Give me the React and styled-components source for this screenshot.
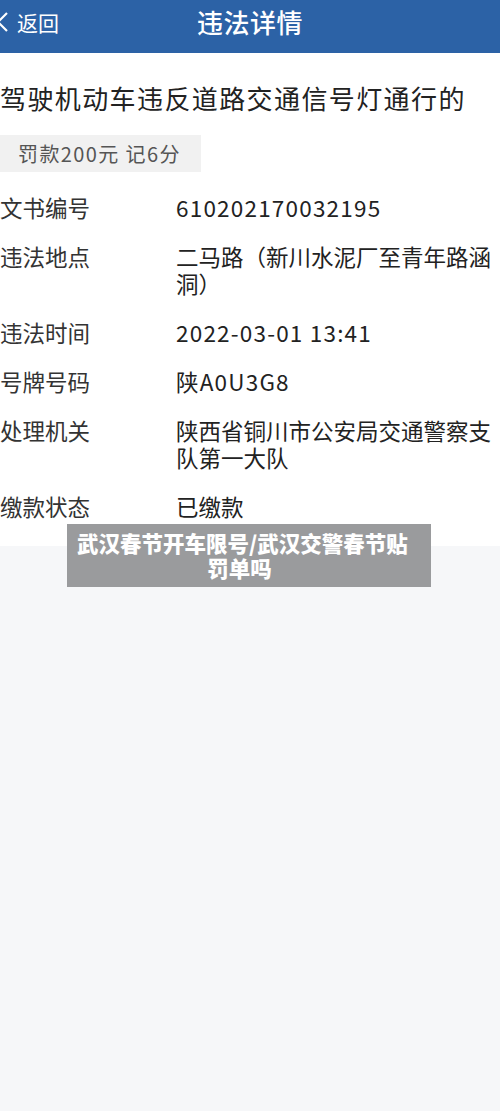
import styled, { createGlobalStyle } from 'styled-components';

const GlobalStyle = createGlobalStyle`
  html, body {
    margin: 0;
    padding: 0;
    background: #f6f7f9;
  }
  body {
    font-family: "Noto Sans CJK SC", "Noto Sans", sans-serif;
  }
`

// latin: value is mostly digits/letters, drawn a bit wider like the app font
const rows = [
  { label: '文书编号', value: '610202170032195', latin: true },
  { label: '违法地点', value: '二马路（新川水泥厂至青年路涵洞）' },
  { label: '违法时间', value: '2022-03-01 13:41', latin: true },
  { label: '号牌号码', value: '陕A0U3G8', latin: true },
  { label: '处理机关', value: '陕西省铜川市公安局交通警察支队第一大队' },
  { label: '缴款状态', value: '已缴款' },
]

export default function App() {
  return (
    <>
      <GlobalStyle />
      <Page>
        <Header>
          <Back>
            <svg width="8" height="22" viewBox="0 0 8 22">
              <path d="M7 2 L-2 11 L7 20" fill="none" stroke="#fff" strokeWidth="2.2" />
            </svg>
            <span>返回</span>
          </Back>
          <HeaderTitle>违法详情</HeaderTitle>
          <div />
        </Header>

        <Detail>
          <Title>驾驶机动车违反道路交通信号灯通行的</Title>
          <Tag>罚款200元 记6分</Tag>
          <List>
            {rows.map((r) => (
              <Row key={r.label}>
                <Label>{r.label}</Label>
                <Value $latin={r.latin}>{r.value}</Value>
              </Row>
            ))}
          </List>
        </Detail>

        <Caption>
          武汉春节开车限号/武汉交警春节贴<br />罚单吗
        </Caption>
      </Page>
    </>
  )
}

const Page = styled.div`
  position: relative;
  width: 500px;
  min-height: 1111px;
  background: #f6f7f9;
`

const Header = styled.div`
  height: 53px;
  box-sizing: border-box;
  padding-bottom: 9px;
  background: #2c62a6;
  color: #fff;
  display: grid;
  grid-template-columns: 1fr auto 1fr;
  align-items: center;
`

const Back = styled.div`
  display: flex;
  align-items: center;
  gap: 9px;
  font-size: 21px;
  line-height: 28px;

  svg {
    display: block;
  }
`

const HeaderTitle = styled.div`
  font-size: 26px;
  line-height: 32px;
  font-weight: 500;
  letter-spacing: 0.5px;
`

const Detail = styled.div`
  background: #fff;
  padding: 30px 0 26px;
`

const Title = styled.div`
  font-size: 26px;
  line-height: 30px;
  color: #222;
  letter-spacing: 1.4px;
  white-space: nowrap;
`

const Tag = styled.div`
  display: inline-block;
  margin-top: 22px;
  width: 201px;
  height: 37px;
  box-sizing: border-box;
  padding-left: 18px;
  background: #f1f1f1;
  color: #555;
  font-size: 20px;
  letter-spacing: 1.4px;
  line-height: 37px;
  white-space: nowrap;
`

const List = styled.div`
  margin-top: 22px;
  display: flex;
  flex-direction: column;
  gap: 22px;
`

const Row = styled.div`
  display: grid;
  grid-template-columns: 176px 1fr;
  font-size: 22.5px;
  line-height: 27px;
`

const Label = styled.div`
  color: #333;
`

const Value = styled.div`
  color: #222;
  padding-right: 2px;
  letter-spacing: ${(p) => (p.$latin ? '1.2px' : '0')};
`

const Caption = styled.div`
  position: absolute;
  left: 67px;
  top: 524px;
  width: 364px;
  height: 63px;
  box-sizing: border-box;
  padding: 6px 29px 0 10px;
  background: #9a9b9d;
  color: #fff;
  font-size: 21.5px;
  font-weight: 900;
  line-height: 25px;
  text-align: center;
  white-space: nowrap;
`
